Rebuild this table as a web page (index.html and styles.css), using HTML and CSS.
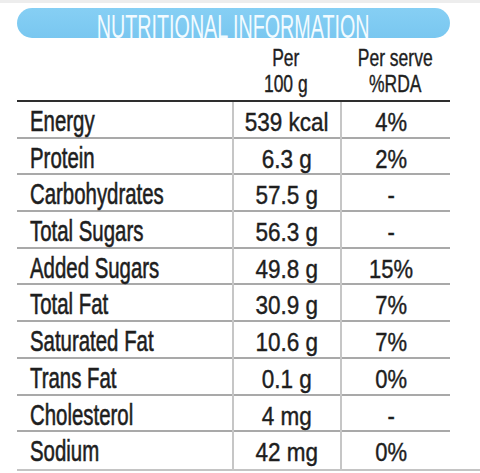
FILE: index.html
```html
<!DOCTYPE html>
<html lang="en">
<head>
    <meta charset="UTF-8">
    <meta name="viewport" content="width=device-width, initial-scale=1.0">
    <title>Nutritional Information</title>
    <link rel="stylesheet" href="styles.css">
</head>
<body>
    <div class="panel">
        <div class="title"><span>NUTRITIONAL INFORMATION</span></div>

        <div class="heads">
            <div></div>
            <div class="head"><span>Per<br>100 g</span></div>
            <div class="head"><span>Per serve<br>%RDA</span></div>
        </div>

        <div class="facts">
            <div class="row">
                <div class="name"><span>Energy</span></div>
                <div class="val"><span>539 kcal</span></div>
                <div class="rda"><span>4%</span></div>
            </div>
            <div class="row">
                <div class="name"><span>Protein</span></div>
                <div class="val"><span>6.3 g</span></div>
                <div class="rda"><span>2%</span></div>
            </div>
            <div class="row">
                <div class="name"><span>Carbohydrates</span></div>
                <div class="val"><span>57.5 g</span></div>
                <div class="rda"><span>-</span></div>
            </div>
            <div class="row">
                <div class="name"><span>Total Sugars</span></div>
                <div class="val"><span>56.3 g</span></div>
                <div class="rda"><span>-</span></div>
            </div>
            <div class="row">
                <div class="name"><span>Added Sugars</span></div>
                <div class="val"><span>49.8 g</span></div>
                <div class="rda"><span>15%</span></div>
            </div>
            <div class="row">
                <div class="name"><span>Total Fat</span></div>
                <div class="val"><span>30.9 g</span></div>
                <div class="rda"><span>7%</span></div>
            </div>
            <div class="row">
                <div class="name"><span>Saturated Fat</span></div>
                <div class="val"><span>10.6 g</span></div>
                <div class="rda"><span>7%</span></div>
            </div>
            <div class="row">
                <div class="name"><span>Trans Fat</span></div>
                <div class="val"><span>0.1 g</span></div>
                <div class="rda"><span>0%</span></div>
            </div>
            <div class="row">
                <div class="name"><span>Cholesterol</span></div>
                <div class="val"><span>4 mg</span></div>
                <div class="rda"><span>-</span></div>
            </div>
            <div class="row">
                <div class="name"><span>Sodium</span></div>
                <div class="val"><span>42 mg</span></div>
                <div class="rda"><span>0%</span></div>
            </div>
        </div>
    </div>
    <div class="foot"></div>
</body>
</html>
```

FILE: styles.css
```css
body {
    margin: 0;
    padding: 0;
    background-color: #fff;
    border-top: 3px solid #ededed;
    font-family: "Liberation Sans", Arial, sans-serif;
    color: #1e1e1e;
}

.panel {
    width: 433px;
    margin-left: 17px;
    padding-top: 5px;
}

/* blue pill with the heading */
.title {
    display: flex;
    justify-content: center;
    height: 30px;
    box-sizing: border-box;
    padding-top: 3px;
    border-radius: 15px;
    background: linear-gradient(#86cff4, #79c7f0);
    font-size: 34px;
    line-height: 30px;
    color: #f2fbff;
    white-space: nowrap;
}

.title span {
    flex-shrink: 0;
    transform: scaleX(0.58);
}

.heads {
    display: grid;
    grid-template-columns: 215px 108px 110px;
    height: 62px;
    box-sizing: border-box;
    padding-top: 7px;
}

.head {
    text-align: center;
    font-size: 23px;
    line-height: 26px;
    white-space: nowrap;
    -webkit-text-stroke: 0.4px #1e1e1e;
}

.head span {
    display: inline-block;
    transform: scaleX(0.76);
}

.facts {
    border-top: 2px solid #2e2e2e;
}

.row {
    display: grid;
    grid-template-columns: 215px 108px 100px;
    height: 36.7px;
    box-sizing: border-box;
    border-bottom: 2px solid #a9a9a9;
}

.row:last-child {
    border-bottom: none;
}

.name {
    padding-left: 13px;
    font-size: 30px;
    line-height: 37px;
    white-space: nowrap;
    -webkit-text-stroke: 0.6px #1e1e1e;
}

.name span {
    display: inline-block;
    transform: scaleX(0.68);
    transform-origin: left center;
}

.val,
.rda {
    border-left: 2px solid #c6c6c6;
    text-align: center;
    font-size: 25px;
    line-height: 41px;
    white-space: nowrap;
    -webkit-text-stroke: 0.4px #1e1e1e;
}

.val span {
    display: inline-block;
    transform: scaleX(0.9);
}

.rda span {
    display: inline-block;
    transform: scaleX(0.88);
}

.foot {
    margin-left: 17px;
    border-top: 2px solid #c4c4c4;
}
```
